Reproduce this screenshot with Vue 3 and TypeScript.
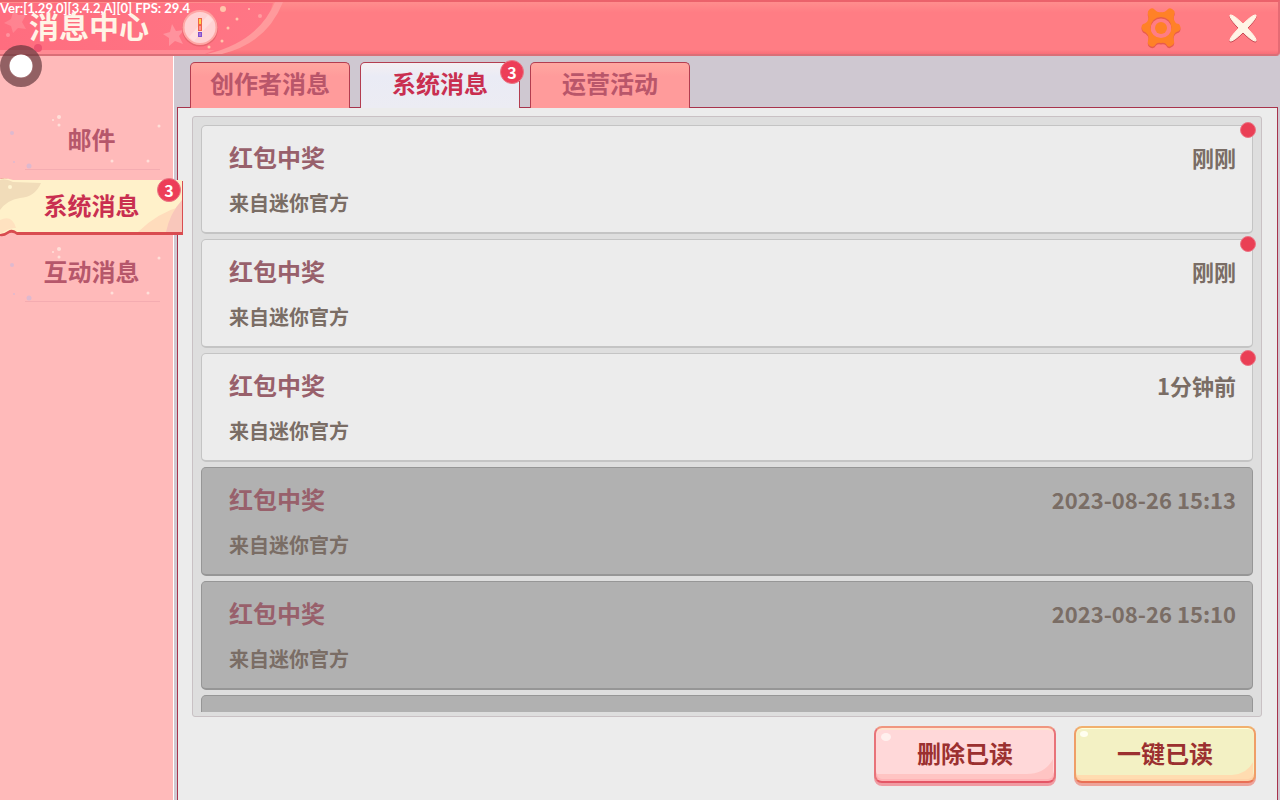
<script setup lang="ts">
import { ref } from 'vue'

interface Message {
  id: number
  title: string
  from: string
  time: string
  read: boolean
}

const sections = [
  { name: '邮件', count: 0 },
  { name: '系统消息', count: 3 },
  { name: '互动消息', count: 0 },
]
const tabs = [
  { name: '创作者消息', count: 0 },
  { name: '系统消息', count: 3 },
  { name: '运营活动', count: 0 },
]
const section = ref(1)
const tab = ref(1)

const times = ['刚刚', '刚刚', '1分钟前', '2023-08-26 15:13', '2023-08-26 15:10', '2023-08-26 15:08']
const messages = ref<Message[]>(
  times.map((time, i) => ({ id: i, title: '红包中奖', from: '来自迷你官方', time, read: i > 2 })),
)

function readAll() {
  messages.value.forEach((m) => (m.read = true))
}
function removeRead() {
  messages.value = messages.value.filter((m) => !m.read)
}
</script>

<template>
  <div class="screen">
    <header class="header">
      <svg class="header-art" viewBox="0 0 320 56" width="320" height="56" aria-hidden="true">
        <defs>
          <linearGradient id="band" x1="0" y1="0" x2="1" y2="0">
            <stop offset="0" stop-color="#ff6d7f" />
            <stop offset="1" stop-color="#ff7685" />
          </linearGradient>
        </defs>
        <path d="M0 3H273Q262 42 217 54H0Z" fill="url(#band)" />
        <path d="M275 2H283Q267 43 222 54H207Q258 42 275 2Z" fill="#ff9a9c" />
        <path d="M0 50H215L205 54H0Z" fill="#ff8a93" />
        <g fill="#ff929d">
          <path d="M14 9l4 6 8 0-4 7 4 7-8-1-5 5-2-7-7-3 7-4z" opacity=".6" />
          <path d="M172 24l4 7 8-1-5 6 4 8-8-3-6 5 0-8-6-4 7-2z" />
          <circle cx="38" cy="48" r="4" fill="#ed5370" />
          <circle cx="8" cy="35" r="2" />
        </g>
        <g fill="#ffc5ac">
          <circle cx="223" cy="9" r="3" />
          <circle cx="237" cy="19" r="1.5" />
          <circle cx="228" cy="28" r="1.5" />
          <circle cx="222" cy="41" r="1.5" />
          <circle cx="209" cy="47" r="1.5" />
          <circle cx="249" cy="9" r="1" />
          <circle cx="260" cy="16" r="2" fill="#ff9da0" />
        </g>
      </svg>
      <h1 class="title">消息中心</h1>
      <button class="notice" type="button" aria-label="公告">
        <svg viewBox="0 0 38 38" width="38" height="38">
          <circle cx="19" cy="19.5" r="18" fill="#e9656f" />
          <circle cx="19" cy="18.5" r="17.5" fill="#ffa7a5" />
          <circle cx="19" cy="18.5" r="15.5" fill="#ffd2d3" />
          <path d="M8 28L27 6L32 11L13 32Z" fill="#ffdede" />
          <rect x="17" y="9" width="4" height="13" fill="#ef654a" />
          <rect x="18" y="10" width="2" height="5" fill="#ffd34a" />
          <rect x="18" y="17" width="2" height="4" fill="#ff9198" />
          <rect x="17" y="23" width="4" height="5" fill="#8050ce" />
          <rect x="18" y="24" width="2" height="3" fill="#a779d8" />
        </svg>
      </button>
      <span class="spacer"></span>
      <button class="icon-button" type="button" aria-label="设置">
        <svg viewBox="0 0 42 42" width="42" height="42">
          <path transform="translate(0 1.5)" fill="#e75b4d" fill-rule="evenodd" d="M10 2Q13 0 15 3Q18 6 21 5Q24 6 27 3Q29 0 32 2Q36 4 34 8Q33 12 35 15Q36 17 39 17Q42 21 39 24Q35 25 34 28Q33 30 34 34Q35 37 31 39Q28 41 26 37Q24 35 21 36Q18 35 16 37Q14 41 10 39Q7 37 8 34Q9 30 8 28Q6 25 3 24Q0 20 3 17Q7 16 8 13Q9 11 8 8Q7 4 10 2ZM21 10A10.5 10.5 0 1 0 21 31A10.5 10.5 0 1 0 21 10Z" />
          <path fill="#ff8127" fill-rule="evenodd" d="M10 2Q13 0 15 3Q18 6 21 5Q24 6 27 3Q29 0 32 2Q36 4 34 8Q33 12 35 15Q36 17 39 17Q42 21 39 24Q35 25 34 28Q33 30 34 34Q35 37 31 39Q28 41 26 37Q24 35 21 36Q18 35 16 37Q14 41 10 39Q7 37 8 34Q9 30 8 28Q6 25 3 24Q0 20 3 17Q7 16 8 13Q9 11 8 8Q7 4 10 2ZM21 10A10.5 10.5 0 1 0 21 31A10.5 10.5 0 1 0 21 10Z" />
          <circle cx="21" cy="21" r="6" fill="#ff8127" />
        </svg>
      </button>
      <button class="icon-button close" type="button" aria-label="关闭">
        <svg viewBox="0 0 32 32" width="32" height="32">
          <path transform="translate(0 1)" fill="#c74b55" stroke="#c74b55" stroke-linejoin="round" d="M3 3Q6 2 16 12Q26 2 29 3Q30 6 20 16Q30 26 29 29Q26 30 16 20Q6 30 3 29Q2 26 12 16Q2 6 3 3Z" />
          <path fill="#fff5e6" stroke="#fff5e6" stroke-linejoin="round" d="M3 3Q6 2 16 12Q26 2 29 3Q30 6 20 16Q30 26 29 29Q26 30 16 20Q6 30 3 29Q2 26 12 16Q2 6 3 3Z" />
        </svg>
      </button>
    </header>

    <div class="body">
      <nav class="sidebar">
        <button
          v-for="(s, i) in sections"
          :key="s.name"
          type="button"
          class="section"
          :class="{ active: section === i }"
          @click="section = i"
        >
          <svg v-if="section === i" class="section-art" viewBox="0 0 183 60" width="183" height="60" aria-hidden="true">
            <path d="M0 1Q5 -1 13 3H183V57H17Q12 53 8 56Q4 59 0 58Z" fill="#d94c50" />
            <path d="M0 1Q5 -1 13 2H182V54H17Q12 50 8 53Q4 56 0 56Z" fill="#fff1ca" />
            <path d="M0 2Q5 0 13 4L41 5Q35 19 20 20Q7 22 0 32Z" fill="#f1dcb9" />
            <circle cx="10" cy="9" r="2" fill="#fff5d3" />
            <path d="M0 42Q12 36 16 50Q10 49 0 56Z" fill="#ffe2c0" />
            <path d="M182 28Q157 35 138 54H182Z" fill="#ffdcbc" />
            <path d="M182 22Q170 35 166 54H182Z" fill="#f9c7bb" />
          </svg>
          <svg v-else class="section-art" viewBox="0 0 183 60" width="183" height="60" aria-hidden="true">
            <g fill="#ffdfd9">
              <circle cx="59" cy="5" r="2" />
              <circle cx="59" cy="13" r="1.5" />
              <circle cx="53" cy="8" r="1" />
              <circle cx="159" cy="14" r="1.5" />
              <circle cx="112" cy="49" r="1.5" />
              <circle cx="148" cy="49" r="1.5" />
            </g>
            <g fill="#deb9cf">
              <circle cx="12" cy="21" r="2" />
              <circle cx="29" cy="54" r="2.5" />
              <circle cx="14" cy="50" r="1" />
            </g>
            <path d="M25 57.5H160" stroke="#f4acb1" />
          </svg>
          <span class="section-name">{{ s.name }}</span>
          <span v-if="s.count" class="badge">{{ s.count }}</span>
        </button>
      </nav>

      <main class="main">
        <div class="tabs" role="tablist">
          <button
            v-for="(t, i) in tabs"
            :key="t.name"
            type="button"
            role="tab"
            class="tab"
            :class="{ active: tab === i }"
            :aria-selected="tab === i"
            @click="tab = i"
          >
            {{ t.name }}
            <span v-if="t.count" class="badge">{{ t.count }}</span>
          </button>
        </div>

        <div class="panel">
          <div class="well">
            <ul class="list">
              <li v-for="m in messages" :key="m.id" class="card" :class="{ read: m.read }">
                <div class="card-top">
                  <h2 class="card-title">{{ m.title }}</h2>
                  <time class="card-time">{{ m.time }}</time>
                </div>
                <p class="card-from">{{ m.from }}</p>
                <span v-if="!m.read" class="dot"></span>
              </li>
            </ul>
          </div>
          <div class="actions">
            <button type="button" class="action pink" @click="removeRead">
              <svg class="action-art" viewBox="0 0 176 50" preserveAspectRatio="none" aria-hidden="true">
                <path d="M176 30Q168 45 150 45H0V50H176Z" fill="#ffc4c3" />
                <ellipse cx="9" cy="8" rx="5" ry="4" fill="#fff0ee" />
              </svg>
              <span class="action-name">删除已读</span>
            </button>
            <button type="button" class="action yellow" @click="readAll">
              <svg class="action-art" viewBox="0 0 176 50" preserveAspectRatio="none" aria-hidden="true">
                <path d="M176 33Q170 45 155 46H0V50H176Z" fill="#ffdcb0" />
                <ellipse cx="7" cy="5" rx="4" ry="3" fill="#fffef0" />
              </svg>
              <span class="action-name">一键已读</span>
            </button>
          </div>
        </div>
      </main>
    </div>

    <div class="version">Ver:[1.29.0][3.4.2,A][0] FPS: 29.4</div>
    <div class="touch"></div>
  </div>
</template>

<style>
body {
  margin: 0;
}
</style>

<style scoped>
* {
  box-sizing: border-box;
}
.screen {
  position: relative;
  display: flex;
  flex-direction: column;
  height: 100vh;
  overflow: hidden;
  background: #cfc8d1;
  font-family: 'Noto Sans CJK SC', sans-serif;
  font-weight: 500;
}
button {
  margin: 0;
  padding: 0;
  border: 0;
  background: none;
  font: inherit;
  color: inherit;
  cursor: pointer;
}
h1,
h2,
p,
ul {
  margin: 0;
  padding: 0;
  list-style: none;
}
svg {
  display: block;
}

.header {
  position: relative;
  display: flex;
  flex: none;
  align-items: center;
  height: 56px;
  padding: 0 19px 0 29px;
  border-top: 2px solid #eb626b;
  border-bottom: 2px solid #d96f77;
  border-right: 2px solid #e56b74;
  border-radius: 0 0 4px 0;
  background: linear-gradient(#ff8d8d, #ff7d84 20%, #ff7d84 92%, #f86e78);
}
.header-art {
  position: absolute;
  left: 0;
  top: -2px;
}
.title {
  position: relative;
  padding-bottom: 6px;
  font-size: 30px;
  line-height: 46px;
  font-weight: 700;
  color: #fff4e6;
}
.notice {
  position: relative;
  margin-left: 32px;
}
.spacer {
  flex: 1;
}
.icon-button.close {
  margin-left: 45px;
}

.body {
  display: flex;
  flex: 1;
  min-height: 0;
}
.sidebar {
  position: relative;
  z-index: 1;
  display: flex;
  flex: none;
  flex-direction: column;
  gap: 6px;
  width: 174px;
  padding-top: 56px;
  border-right: 1px solid #fff;
  background: #ffbaba;
}
.section {
  position: relative;
  flex: none;
  width: 183px;
  height: 60px;
  padding-bottom: 6px;
  color: #b6576b;
}
.section.active {
  color: #c92f50;
}
.section-art {
  position: absolute;
  left: 0;
  top: 0;
}
.section-name {
  position: relative;
  font-size: 24px;
  line-height: 36px;
  font-weight: 700;
}
.badge {
  position: absolute;
  display: flex;
  align-items: center;
  justify-content: center;
  width: 24px;
  height: 24px;
  border: 1px solid #e87885;
  border-radius: 50%;
  background: #ed3e58;
  color: #fff;
  font-size: 16px;
  line-height: 20px;
  font-weight: 700;
}
.section .badge {
  right: 2px;
  top: 0;
}

.main {
  display: flex;
  flex: 1;
  flex-direction: column;
  min-width: 0;
  padding: 6px 2px 0 3px;
}
.tabs {
  position: relative;
  z-index: 1;
  display: flex;
  gap: 10px;
  height: 46px;
  padding-left: 13px;
}
.tab {
  position: relative;
  width: 160px;
  height: 46px;
  padding-bottom: 5px;
  border: 1px solid #b33d50;
  border-bottom: 0;
  border-radius: 5px 5px 0 0;
  background: linear-gradient(#ffa7a0, #ff9b9b 30%);
  font-size: 24px;
  line-height: 36px;
  font-weight: 700;
  color: #b9566a;
}
.tab.active {
  background: linear-gradient(#f4eff2, #eaebf5 30%, #ececf3);
  color: #c92f50;
}
.tab .badge {
  right: -5px;
  top: -3px;
}
.panel {
  display: flex;
  flex: 1;
  flex-direction: column;
  min-height: 0;
  margin-top: -1px;
  padding: 8px 15px 14px 14px;
  border: 1px solid #a8334c;
  border-bottom: 0;
  background: #ececec;
}
.well {
  flex: 1;
  min-height: 0;
  padding: 0 3px 4px 3px;
  border: 1px solid #c9c1c4;
  border-radius: 3px;
  background: #dedede;
}
.list {
  display: flex;
  flex-direction: column;
  gap: 5px;
  height: 100%;
  padding: 8px 5px 0;
  overflow: hidden;
}
.card {
  position: relative;
  flex: none;
  height: 109px;
  padding: 13px 16px 0 27px;
  border: 1px solid #c4c4c4;
  border-bottom-width: 2px;
  border-radius: 5px;
  background: #ececec;
}
.card.read {
  border-color: #969696;
  background: #b1b1b1;
}
.card-top {
  display: flex;
  align-items: center;
  justify-content: space-between;
}
.card-title {
  font-size: 24px;
  line-height: 36px;
  font-weight: 700;
  color: #98606b;
}
.card-time {
  font-size: 22px;
  line-height: 36px;
  font-weight: 700;
  color: #7a6d65;
}
.card-from {
  margin-top: 12px;
  font-size: 20px;
  line-height: 32px;
  font-weight: 700;
  color: #7a6d65;
}
.dot {
  position: absolute;
  right: -4px;
  top: -4px;
  width: 16px;
  height: 16px;
  border: 1px solid #eb7585;
  border-radius: 50%;
  background: #ea3f55;
}
.actions {
  display: flex;
  flex: none;
  justify-content: flex-end;
  gap: 18px;
  padding: 9px 6px 3px 0;
}
.action {
  position: relative;
  width: 182px;
  height: 57px;
  padding-bottom: 3px;
  border: 2px solid;
  border-radius: 8px;
  font-size: 24px;
  line-height: 36px;
  font-weight: 700;
  color: #9b3030;
}
.pink {
  background: #ffd8d9;
  border-color: #f0967f #e8737a #e45666;
  box-shadow: 0 3px 0 #f09ba2, inset 0 2px 0 #ffe3cf, inset 0 -4px 0 #ffb3b6;
}
.yellow {
  background: #f3f1c4;
  border-color: #f1b06d #ef9e67 #e97055;
  box-shadow: 0 3px 0 #eda39a, inset 0 1px 0 #ffffda, inset 0 -3px 0 #ffd2a8;
}
.action-art {
  position: absolute;
  left: 1px;
  top: 1px;
  width: calc(100% - 2px);
  height: calc(100% - 3px);
  border-radius: 5px;
}
.action-name {
  position: relative;
}

.version {
  position: absolute;
  left: 0;
  top: 0;
  font-family: Lato, sans-serif;
  font-size: 13px;
  line-height: 16px;
  font-weight: 700;
  color: #fff;
  white-space: nowrap;
}
.touch {
  position: absolute;
  z-index: 2;
  left: 0;
  top: 45px;
  width: 42px;
  height: 42px;
  border: 9px solid rgba(90, 50, 55, 0.66);
  border-radius: 50%;
  background: radial-gradient(circle, #fff 0 11px, rgba(90, 50, 55, 0.66) 12px) content-box;
}
</style>
